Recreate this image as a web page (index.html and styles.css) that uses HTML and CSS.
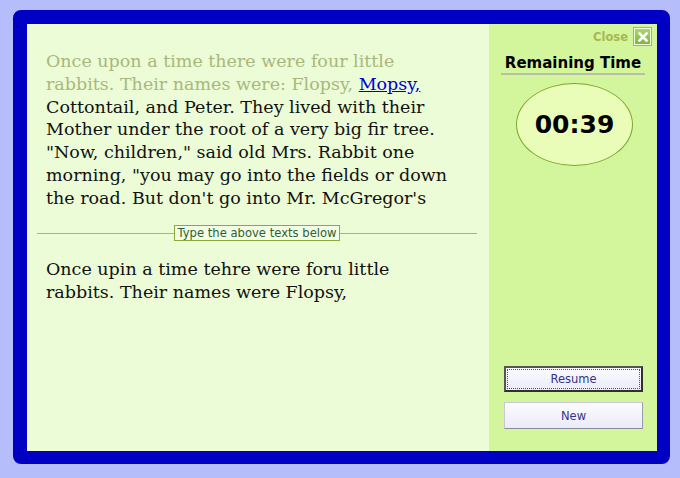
FILE: index.html
```html
<!DOCTYPE html>
<html>
<head>
<meta charset="utf-8">
<link rel="stylesheet" href="styles.css">
</head>
<body>
<div class="frame">
  <div class="main">
    <div class="passage">
      <span class="done">Once upon a time there were four little rabbits. Their names were: Flopsy, </span><a class="current" href="#">Mopsy,</a> Cottontail, and Peter. They lived with their Mother under the root of a very big fir tree. "Now, children," said old Mrs. Rabbit one morning, "you may go into the fields or down the road. But don't go into Mr. McGregor's garden: your Father had an accident there; he was put in a pie by Mrs. McGregor."
    </div>
    <div class="divider">
      <span class="rule"></span>
      <span class="label">Type the above texts below</span>
      <span class="rule"></span>
    </div>
    <div class="typed">Once upin a time tehre were foru little rabbits. Their names were Flopsy,</div>
  </div>
  <div class="side">
    <div class="close-row">
      <span class="close-text">Close</span>
      <span class="close-btn">
        <svg width="12" height="12" viewBox="0 0 12 12"><path d="M2.5 2.5 L9.5 9.5 M9.5 2.5 L2.5 9.5" stroke="#fff" stroke-width="2.6" stroke-linecap="square"/></svg>
      </span>
    </div>
    <div class="title">Remaining Time</div>
    <div class="timer">00:39</div>
    <div class="spacer"></div>
    <button class="btn focused"><span class="focus-ring">Resume</span></button>
    <button class="btn">New</button>
  </div>
</div>
</body>
</html>
```
FILE: styles.css
```css
html, body {
  margin: 0;
  padding: 0;
}
body {
  background: #b5befb;
  width: 680px;
  height: 478px;
  overflow: hidden;
}
.frame {
  box-sizing: border-box;
  margin: 10px 0 0 13px;
  width: 657px;
  height: 454px;
  border-style: solid;
  border-color: #0000c4;
  border-width: 14px 13px 13px 14px;
  border-radius: 8px;
  display: flex;
  overflow: hidden;
}
.main {
  flex: 1;
  background: #ebfcd7;
  display: flex;
  flex-direction: column;
  padding: 26px 12px 0 10px;
}
.passage {
  font-family: "DejaVu Serif", serif;
  font-size: 17.5px;
  line-height: 22.8px;
  color: #111;
  height: 160px;
  overflow: hidden;
  padding: 0 23px 0 9px;
}
.done {
  color: #aab77a;
}
.current {
  color: #0000cc;
  text-decoration: underline;
}
.divider {
  display: flex;
  align-items: center;
  margin-top: 15px;
}
.rule {
  flex: 1;
  height: 1px;
  background: #99cc33;
}
.label {
  font-family: "DejaVu Sans", Verdana, sans-serif;
  font-size: 11.6px;
  line-height: 14px;
  color: #2f5f2f;
  border: 1px solid #8aab3a;
  background: #f3fde6;
  padding: 0 2px;
}
.typed {
  font-family: "DejaVu Serif", serif;
  font-size: 17.5px;
  line-height: 22.8px;
  color: #111;
  padding: 17px 23px 0 9px;
}
.side {
  width: 168px;
  background: #d3f59b;
  display: flex;
  flex-direction: column;
  align-items: center;
  padding-bottom: 22px;
  box-sizing: border-box;
}
.close-row {
  align-self: stretch;
  display: flex;
  justify-content: flex-end;
  align-items: center;
  gap: 6px;
  padding: 4px 6px 0 0;
  height: 17px;
}
.close-text {
  font-family: "DejaVu Sans", Verdana, sans-serif;
  font-weight: bold;
  font-size: 11.5px;
  color: #a6b84e;
}
.close-btn {
  box-sizing: border-box;
  width: 17px;
  height: 17px;
  background: linear-gradient(#a8d868, #7cb83a);
  border: 1px solid #f4ffe4;
  outline: 1px solid #9ab86a;
  display: flex;
  align-items: center;
  justify-content: center;
}
.title {
  font-family: "DejaVu Sans", Verdana, sans-serif;
  font-weight: bold;
  font-size: 15px;
  color: #000;
  margin-top: 9px;
  width: 144px;
  text-align: center;
  padding-bottom: 1px;
  border-bottom: 2px solid #b8c0a8;
  white-space: nowrap;
}
.timer {
  box-sizing: border-box;
  margin-top: 8px;
  width: 117px;
  height: 83px;
  border-radius: 50%;
  border: 1px solid #7aa82c;
  background: #eafdb8;
  display: flex;
  align-items: center;
  justify-content: center;
  font-family: "DejaVu Sans", Verdana, sans-serif;
  font-weight: bold;
  font-size: 25px;
  color: #000;
  margin-left: 3px;
}
.spacer {
  flex: 1;
}
.btn {
  box-sizing: border-box;
  width: 139px;
  height: 27px;
  margin: 0 0 0 1px;
  padding: 0;
  font-family: "DejaVu Sans", Verdana, sans-serif;
  font-size: 11.5px;
  color: #33338a;
  background: linear-gradient(#fbfbff, #ebebf8);
  border: 1px solid #c8c8d8;
  border-right-color: #9a9aa8;
  border-bottom-color: #8a8a98;
  display: flex;
  align-items: center;
  justify-content: center;
}
.btn + .btn {
  margin-top: 10px;
}
.btn.focused {
  border: 2px solid #303030;
  border-top-color: #555;
  border-left-color: #555;
  padding: 1px;
  height: 26px;
}
.focus-ring {
  flex: 1;
  align-self: stretch;
  display: flex;
  align-items: center;
  justify-content: center;
  border: 1px dotted #555;
}
```
